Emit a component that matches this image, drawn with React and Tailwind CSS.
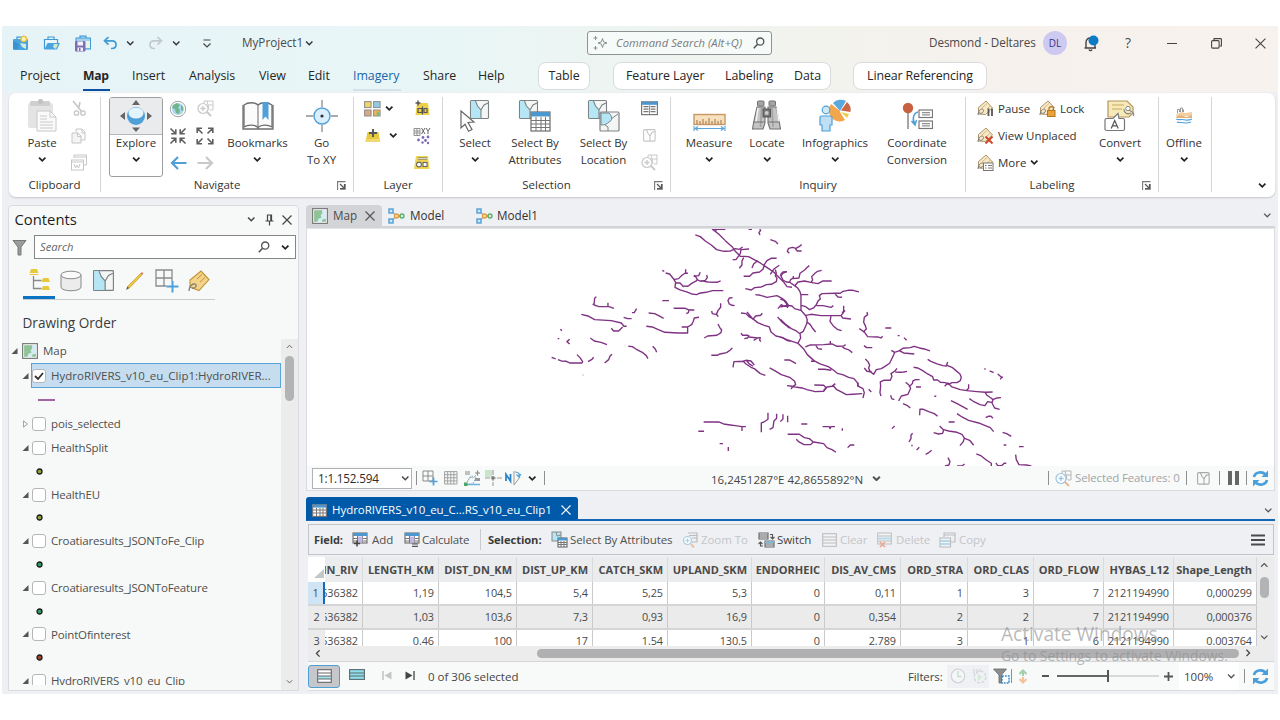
import React from "react";

const Svg = ({ w = 16, h = w, vb, className = "", children }) => (
  <svg width={w} height={h} viewBox={vb || `0 0 ${w} ${h}`} fill="none" className={"shrink-0 " + className}>
    {children}
  </svg>
);

const Chev = ({ c = "#222", s = 1.6, w = 8.5 }) => (
  <Svg w={w} h={w * 0.75} vb="0 0 8 6"><path d="M1 1.500L4 4.500L7 1.500" stroke={c} strokeWidth={s} /></Svg>
);
const Cross = ({ c = "#444", w = 10, s = 1.2 }) => (
  <Svg w={w} vb="0 0 10 10"><path d="M.5 .5L9.5 9.5M9.5 .5L.5 9.5" stroke={c} strokeWidth={s} /></Svg>
);
const Lens = ({ w = 12 }) => (
  <Svg w={w} vb="0 0 12 12"><circle cx="7.2" cy="4.6" r="3.6" stroke="#555" strokeWidth="1.3" /><path d="M4.6 7.3L.8 11.2" stroke="#555" strokeWidth="1.6" /></Svg>
);
const Cell = ({ className = "", children }) => (
  <div className={"flex shrink-0 items-center justify-center " + className}>{children}</div>
);

/* ---------- title bar icons ---------- */
const NewProject = () => (
  <Svg w={17} h={16}><path d="M5 4V2.200h5V4" stroke="#3f9ad6" strokeWidth="1.300" /><rect x="1" y="4" width="15" height="11" rx="1" fill="#4ba3dc" /><path d="M1 6l6 3-1 5H1z" fill="#3b93d2" /><path d="M8 8l6 1 0 5-4-2z" fill="#cfeadf" /><circle cx="11.800" cy="4" r="2.700" fill="#fff3a8" stroke="#e9c04c" strokeWidth="1.200" /><path d="M11.800 .2v1.200M8 4h1.200M14.600 4h1.200M9 1.200l.9.9M14.600 1.200l-.9.9" stroke="#e9c04c" strokeWidth=".8" /></Svg>
);
const OpenProject = () => (
  <Svg w={17} h={16}><path d="M5 4V2h6v2" stroke="#3f9ad6" strokeWidth="1.200" /><path d="M1.500 14V4.500h13V8" fill="#eaf6fb" stroke="#3f9ad6" strokeWidth="1.200" /><path d="M1.500 14.500L4.500 8H17l-3 6.500z" fill="#4ba3dc" /><path d="M11 9l4 0-2 5-3-2z" fill="#cfe8cc" /></Svg>
);
const SaveProject = () => (
  <Svg w={17} h={17}><path d="M6 3V1.200h6V3" stroke="#3f9ad6" strokeWidth="1.200" /><rect x="2" y="3" width="14.500" height="11" fill="#a6d2ef" stroke="#3f9ad6" /><path d="M11 6h5v7h-5z" fill="#e9f5e4" /><rect x="1" y="6" width="10.500" height="10.500" rx="1" fill="#7c6fb5" /><rect x="3.500" y="6.500" width="5.500" height="4" fill="#f3f1fb" /><rect x="3.500" y="12.500" width="5.500" height="3.500" fill="#f3f1fb" /><rect x="5" y="13" width="1.500" height="3" fill="#7c6fb5" /></Svg>
);
const Undo = ({ c, flip }) => (
  <Svg w={14} h={14} className={flip ? "-scale-x-100" : ""}><path d="M5.500 1L1.500 4.800L5.500 8.600M1.500 4.800H9c2.500 0 4 1.500 4 3.700S11.500 12.500 9 12.500H8" stroke={c} strokeWidth="1.700" /></Svg>
);

const TitleBar = () => (
  <div className="flex h-[34px] items-center text-[11.7px] text-[#4a4a4a]">
    <Cell className="ml-[2px] w-8"><NewProject /></Cell>
    <Cell className="w-[30px]"><OpenProject /></Cell>
    <Cell className="w-8"><SaveProject /></Cell>
    <Cell className="w-6"><Undo c="#3f9ad6" /></Cell>
    <Cell className="w-4"><Chev c="#333" s={1.3} /></Cell>
    <Cell className="ml-1 w-7"><Undo c="#c3c9cc" flip /></Cell>
    <Cell className="w-3"><Chev c="#333" s={1.3} /></Cell>
    <Cell className="w-12 pl-[2px]"><Svg w={10} h={9}><path d="M1.500 1h7M1.500 4.500L5 8L8.500 4.500" stroke="#444" strokeWidth="1.200" /></Svg></Cell>
    <span className="ml-3 w-[60px] shrink-0 whitespace-nowrap">MyProject1</span>
    <Cell className="w-[14px]"><Chev c="#333" s={1.3} /></Cell>
    <div className="ml-[271px] flex h-6 w-[185px] shrink-0 items-center rounded-[3px] border border-[#8d9394] bg-[#f6faf9] pl-[5px] text-[11.2px] tracking-[0.08px] italic text-[#7b7b7b]">
      <Svg w={15} h={14}><path d="M9.500 2.500l1.100 3.400 3.400 1.100-3.400 1.100-1.100 3.400-1.100-3.400L5 7l3.400-1.100z" stroke="#8b9092" strokeWidth="1" /><path d="M2.500 0v4M.5 2h4M2.500 10v4M.5 12h4" stroke="#8b9092" /></Svg>
      <span className="ml-2 w-[134px] whitespace-nowrap">Command Search (Alt+Q)</span>
      <span className="ml-[3px]"><Lens w={12} /></span>
    </div>
    <span className="ml-[157px] w-[107px] shrink-0 whitespace-nowrap tracking-[-0.08px]">Desmond - Deltares</span>
    <Cell className="ml-[7px] size-6 rounded-full bg-[#cdc9f1] text-[10px] font-medium text-[#3c3584]">DL</Cell>
    <Cell className="w-12"><Svg w={16} h={17}><path d="M1.500 13h11.500M3 13V7.500C3 4.500 5 3 7.500 3S12 5 12 8v5" stroke="#444" strokeWidth="1.400" /><path d="M6 14.500c.5 1.500 2.500 1.500 3 0" stroke="#444" strokeWidth="1.300" /><circle cx="10.500" cy="5.500" r="5" fill="#0b7bc6" /></Svg></Cell>
    <Cell className="w-[26px] text-[14px]">?</Cell>
    <Cell className="w-[62px]"><div className="h-px w-[10px] bg-[#444]" /></Cell>
    <Cell className="w-[26px]"><Svg w={11} h={11}><rect x=".6" y="2.600" width="7.500" height="7.500" rx="1" stroke="#444" strokeWidth="1.100" /><path d="M3 2.500V.6h6.500c.6 0 .9.4.9.9V8H8.500" stroke="#444" strokeWidth="1.100" /></Svg></Cell>
    <Cell className="ml-[13px] w-9"><Cross w={11} s={1} /></Cell>
  </div>
);

const RibbonTabs = () => (
  <div className="flex h-[32px] items-center whitespace-nowrap text-[12.4px] tracking-[-0.05px] text-[#262626]">
    <span className="ml-[18px] w-[63px]">Project</span>
    <span className="mr-[22px] mt-[5px] h-[25px] w-[27px] border-b-2 border-[#0b4fa0] pt-px text-[12.2px] font-bold leading-[18px] tracking-[-0.3px]">Map</span>
    <span className="w-[57px]">Insert</span>
    <span className="w-[70px]">Analysis</span>
    <span className="w-[49px]">View</span>
    <span className="w-[45px]">Edit</span>
    <span className="mr-[22px] mt-[5px] h-[25px] w-[48px] border-b-2 border-[#d6e0e8] pt-px leading-[18px] text-[#1a65ad]">Imagery</span>
    <span className="w-[55px]">Share</span>
    <span className="w-[60px]">Help</span>
    <Cell className="h-7 w-[52px] rounded-lg border border-[#d8dbde] bg-white">Table</Cell>
    <div className="ml-[23px] flex h-7 w-[218px] items-center rounded-lg border border-[#d8dbde] bg-white pl-[12px]">
      <span className="w-[99px]">Feature Layer</span><span className="w-[69px]">Labeling</span><span>Data</span>
    </div>
    <Cell className="ml-[22px] h-7 w-[134px] rounded-lg border border-[#d8dbde] bg-white tracking-[-0.12px]">Linear Referencing</Cell>
  </div>
);

/* ---------- ribbon icons ---------- */
const PasteIcon = () => (
  <Svg w={30} h={34}><rect x="1" y="4" width="25" height="25" rx="2" fill="#e4e4e4" /><rect x="3" y="2" width="20" height="5" rx="1" fill="#cfcfcf" /><rect x="11" y="0" width="5" height="5" rx="2" fill="#c2c2c2" /><path d="M10 12h13l6 6v14H10z" fill="#fafafa" stroke="#c8c8c8" /><path d="M23 12v6h6M13 17h7M13 20h7M13 23h13M13 26h13M13 29h13" stroke="#c8c8c8" /></Svg>
);
const CutIcon = () => (
  <Svg w={16} h={17}><path d="M2 1l9 11M9 2L8 7" stroke="#c6c6c6" strokeWidth="1.600" /><circle cx="5.500" cy="13" r="2.200" stroke="#c6c6c6" strokeWidth="1.300" /><circle cx="12" cy="13" r="2.200" stroke="#c6c6c6" strokeWidth="1.300" /></Svg>
);
const CopyIcon = ({ c = "#c6c6c6" }) => (
  <Svg w={16} h={16}><path d="M5 4V1h6l3 3v8h-4" fill="#fbfbfb" stroke={c} /><path d="M11 1v4h3" stroke={c} /><path d="M1 5h6l3 3v7H1z" fill="#f4f4f4" stroke={c} /><path d="M6.500 5v3.500h3.500" stroke={c} /></Svg>
);
const CopyPathIcon = () => (
  <Svg w={16} h={17}><path d="M3 4V1h12.500v10h-3" stroke="#c6c6c6" /><path d="M3 3h12" stroke="#c6c6c6" /><rect x=".5" y="6" width="12" height="10" stroke="#c6c6c6" /><path d="M.5 8h12M3 10l1.500 4 1.500-3 1.500 3L9 10" stroke="#c6c6c6" /></Svg>
);
const ExploreIcon = () => (
  <Svg w={32} h={32}><circle cx="16" cy="16" r="9" fill="#4f9fd8" /><ellipse cx="16" cy="13" rx="7.500" ry="5.500" fill="#e3f4fd" /><path d="M12 5h8l-4-5zM12 27.500h8l-4 4.500zM5 12v8l-5-4zM27 12v8l5-4z" fill="#666" /></Svg>
);
const GlobeIcon = () => (
  <Svg w={18} h={18}><circle cx="9" cy="9" r="7.700" fill="#fff" stroke="#999" strokeWidth=".9" /><circle cx="9" cy="9" r="6" fill="#aad6ec" /><path d="M4 5l4-2 3 2-2 3 2 2-1 4-3-1-1-4-3-1zM12 5l2 2v4l-2-1z" fill="#6fb68c" /></Svg>
);
const ZoomSel = ({ c = "#c9c9c9", l = "#c9c9c9", h = "#c9c9c9" }) => (
  <Svg w={17} h={17}><path d="M7 4V1h9v9h-3" stroke={c} /><path d="M10 1l1 4 5 0M11 5l1 5" stroke={c} /><circle cx="6" cy="8.500" r="5" fill="#fdfdfd" stroke={l} strokeWidth="1.200" /><path d="M3.500 8.500h5M6 6v5" stroke={l} strokeWidth="1.300" /><path d="M10 12l4 4" stroke={h} strokeWidth="2" /></Svg>
);
const ArrowsIn = () => (
  <Svg w={18} h={18}><g stroke="#5e5e5e" strokeWidth="1.600"><path d="M1.500 1.500L6 6M2.200 6.800H6.800V2.200M16.500 1.500L12 6M15.800 6.800H11.200V2.200M1.500 16.500L6 12M2.200 11.200H6.800V15.800M16.500 16.500L12 12M15.800 11.200H11.200V15.800" /></g></Svg>
);
const ArrowsOut = () => (
  <Svg w={18} h={18}><g stroke="#5e5e5e" strokeWidth="1.600"><path d="M2 2L6.500 6.500M1.200 6V1.200H6M16 2L11.500 6.500M12 1.200H16.800V6M2 16L6.500 11.500M1.200 12V16.800H6M16 16L11.500 11.500M12 16.800H16.800V12" /></g></Svg>
);
const ArrowBack = ({ c, flip }) => (
  <Svg w={17} h={14} className={flip ? "-scale-x-100" : ""}><path d="M8 1L2 7L8 13M2 7H16.500" stroke={c} strokeWidth="2.200" /></Svg>
);
const BookIcon = () => (
  <Svg w={32} h={30}><path d="M2 4C6 1 13 1 16 4C19 1 26 1 30 4V26C26 23.500 19 23.500 16 26.500C13 23.500 6 23.500 2 26z" fill="#fbfbfb" stroke="#6d6d6d" strokeWidth="1.300" /><path d="M1 4v24h14.500l.5-.8.5.8H31V4" stroke="#6d6d6d" strokeWidth="1.300" /><path d="M16 4v22" stroke="#8a8a8a" strokeWidth="1.300" /><path d="M20.500 1h6v18l-3-3.500-3 3.500z" fill="#4f9fd8" /></Svg>
);
const GoIcon = () => (
  <Svg w={32} h={32}><path d="M16 0v7M16 25v7M0 16h7M25 16h7" stroke="#8d8d8d" strokeWidth="1.300" /><circle cx="16" cy="16" r="8" fill="#d9effb" stroke="#4f9fd8" strokeWidth="1.400" /><circle cx="16" cy="16" r="1.600" fill="#333" /></Svg>
);
const BasemapIcon = () => (
  <Svg w={17} h={16}><rect x=".6" y=".6" width="6.500" height="6" fill="#eed469" stroke="#8d8d8d" /><rect x="9.600" y=".6" width="6.500" height="6" fill="#8fcbe2" stroke="#8d8d8d" /><rect x=".6" y="9" width="6.500" height="6" fill="#d9a987" stroke="#8d8d8d" /><rect x="9.600" y="9" width="6.500" height="6" fill="#f0b654" stroke="#8d8d8d" /><path d="M13 10l2.500 2v3h-3z" fill="#79b98b" /></Svg>
);
const AddLayer = () => (
  <Svg w={18} h={16}><path d="M3.500 4h11l1.500 10H1.500z" fill="#e8c93d" /><path d="M1.800 11.500l14-1 .4 3.500H1.500z" fill="#f0da70" /><path d="M9 1v8M5 5h8" stroke="#555" strokeWidth="1.900" /></Svg>
);
const QueryLayer = () => (
  <Svg w={18} h={17}><path d="M4 3h11l1.500 12H2.500z" fill="#ecd04a" /><path d="M5 .5v5M2.500 3h5" stroke="#555" strokeWidth="1.400" /><path d="M5 8.500h4v4H5zM9.500 6.500v8M11 8.500h3v4h-3z" stroke="#555" strokeWidth="1.200" /></Svg>
);
const XYLayer = () => (
  <Svg w={18} h={18}><path d="M1 1.500h6v7H1zM1 4h6M1 6h6M4 1.500v7" stroke="#888" strokeWidth=".9" /><path d="M8.500 1l3.500 6M12 1l-3.500 6M13 1l2 3 2-3M15 4v3" stroke="#666" strokeWidth="1" /><g fill="#7d68b5"><circle cx="10" cy="10.500" r="1.400" /><circle cx="15" cy="10" r="1.400" /><circle cx="5.500" cy="13" r="1.400" /><circle cx="12.500" cy="13.500" r="1.400" /><circle cx="9.500" cy="15.500" r="1.200" /><circle cx="15" cy="16" r="1.200" /></g></Svg>
);
const GraphicsLayer = () => (
  <Svg w={18} h={16}><path d="M3 1h12l1.500 13H1z" fill="#efd44f" /><path d="M5 3.500h9" stroke="#666" strokeWidth="2" /><path d="M5 3.500h9" stroke="#fff" strokeWidth=".7" /><circle cx="6" cy="9.500" r="2.400" fill="#fff" stroke="#666" strokeWidth="1.100" /><rect x="10" y="7.500" width="4" height="4" fill="#fff" stroke="#666" strokeWidth="1.100" /></Svg>
);
const MapTile = ({ x, y, s = 19, cyan }) => (
  <g transform={`translate(${x} ${y}) scale(${s / 19})`}>
    <rect x=".5" y=".5" width="18" height="18" rx="1" fill="#f4f5f5" stroke="#7d8385" strokeWidth="1.100" />
    {cyan && <path d="M1 1h4.500l2 5 3.500 4v8H1z" fill="#b5e6f5" />}
    <path d="M5.500 1l2 5 3.500 4v8.500M11 10l3-5 4-2" stroke="#7d8385" strokeWidth="1.100" />
  </g>
);
const SelectIcon = () => (
  <Svg w={32} h={34}><MapTile x={11} y={1} cyan /><path d="M2 12l13 11-6 .5 4 7-3.500 1.800-3.500-7L2 29z" fill="#fff" stroke="#666" strokeWidth="1.200" /></Svg>
);
const SelectAttr = () => (
  <Svg w={34} h={34}><MapTile x={1} y={1} cyan /><rect x="13" y="13" width="19" height="19" fill="#fff" stroke="#6d6d6d" strokeWidth="1.200" /><rect x="13" y="13" width="19" height="4.500" fill="#4d97cf" /><path d="M13 21.500h19M13 25h19M13 28.500h19M18 18v14M23 18v14M27.500 18v14" stroke="#777" /></Svg>
);
const SelectLoc = () => (
  <Svg w={34} h={34}><MapTile x={1} y={1} cyan /><rect x="13" y="13" width="19" height="19" rx="1" fill="#f4f5f5" stroke="#7d8385" strokeWidth="1.200" /><path d="M14 14h8c4 4 3 8 0 9-2 2-4 3-8 3z" fill="#b5e6f5" stroke="#7d8385" /><path d="M18 26l3 2v4M24 20l7-5" stroke="#7d8385" /></Svg>
);
const TableSm = ({ w = 17, c = "#777" }) => (
  <Svg w={w} h={w * 0.85} vb="0 0 17 14"><rect x=".6" y=".6" width="15.800" height="12.800" fill="#fff" stroke={c} strokeWidth="1.200" /><rect x=".6" y=".6" width="15.800" height="3" fill="#4d97cf" /><path d="M2.500 5.500h5M9.500 5.500h5M2.500 8h5M9.500 8h5M2.500 10.500h5M9.500 10.500h5" stroke={c} strokeWidth="1.200" /><path d="M8.500 4v9" stroke={c} strokeWidth=".8" /></Svg>
);
const ClearSel = ({ c = "#c6c6c6" }) => (
  <Svg w={13} h={13}><rect x=".6" y=".6" width="11.500" height="11.500" rx="1" stroke={c} strokeWidth="1.100" /><path d="M3.500 1l1.500 3.500L7 7v5M7 7l2-3.500L12 2.500" stroke={c} strokeWidth="1.100" /></Svg>
);
const MeasureIcon = () => (
  <Svg w={33} h={18}><rect x="1" y="1.500" width="31" height="10" fill="#f6e0bd" stroke="#c79763" strokeWidth="1.400" /><path d="M4 11V7M7 11V8M10 11V6M13 11V8M16 11V5M19 11V8M22 11V6M25 11V8M28 11V7" stroke="#a87b4a" strokeWidth="1.100" /><path d="M3 15.500h27M1 13v5M32 13v5M5 13.500l-3 2 3 2M28 13.500l3 2-3 2" stroke="#5aa5dc" strokeWidth="1.100" /></Svg>
);
const Binoc = () => (
  <Svg w={32} h={32}><rect x="6.500" y="1" width="6.500" height="5" rx="1" fill="#a5a5a5" stroke="#707070" /><rect x="18" y="1" width="6.500" height="5" rx="1" fill="#a5a5a5" stroke="#707070" /><path d="M6 7h8v16l-2 6H1.500L2.500 23zM25 7h-8v16l2 6h10.500L28.500 23z" fill="#c4c4c4" stroke="#707070" strokeWidth="1.100" /><path d="M7 8l-2 14M26 8l2 14" stroke="#f3f3f3" strokeWidth="1.600" /><path d="M10.500 8l-1 19M21 8l1 19" stroke="#a2a2a2" strokeWidth="1.600" /><rect x="12" y="9" width="7.500" height="8" fill="#777" stroke="#555" /><circle cx="15.700" cy="13" r="2" fill="#ccc" /><path d="M2.500 22h11M17.500 22h11" stroke="#707070" /></Svg>
);
const InfoIcon = () => (
  <Svg w={34} h={34}><path d="M22 12L15 4A11 11 0 0 1 28 2z" fill="#5ba8df" /><path d="M22 12L13 5a11 11 0 0 0 9 17.500z" fill="#f2a64e" /><path d="M23 11.500L29 3a11 11 0 0 1 3.500 10z" fill="#cb6744" /><path d="M23 13l8 2-2 4z" fill="#e9cd47" /><path d="M22 13l5 8a11 11 0 0 1-6 1.500z" fill="#f2a64e" /><circle cx="8" cy="11" r="3.800" fill="#cfe8f8" stroke="#4f9fd8" strokeWidth="1.200" /><path d="M3.500 17h9c1 0 1.500.5 1.500 1.500V26h-2v6H4v-6H2v-7.500c0-1 .5-1.500 1.500-1.500z" fill="#bfdff4" stroke="#4f9fd8" strokeWidth="1.200" /></Svg>
);
const CoordIcon = () => (
  <Svg w={32} h={30}><path d="M7 8v20" stroke="#888" strokeWidth="1.500" /><circle cx="7" cy="7" r="5.200" fill="#c8613f" /><rect x="18" y="9" width="13.500" height="7.500" fill="#fff" stroke="#777" strokeWidth="1.200" /><rect x="18" y="20" width="13.500" height="7.500" fill="#fff" stroke="#777" strokeWidth="1.200" /><path d="M21 11.700h8M21 13.900h8M21 22.700h8M21 24.900h8" stroke="#777" /><path d="M17 11c-5 1-6 8-3 12M10.500 20l3.500 4 1.500-5" stroke="#4f9fd8" strokeWidth="1.500" /></Svg>
);
const Tag = ({ kind }) => (
  <Svg w={17} h={17}><path d="M1.500 14V7.500L9 1l6.500 7-7 6.500z" fill="#f8e9c6" stroke="#b09468" strokeWidth="1" /><path d="M5 8l5-4.500M10 9l3.500-3" stroke="#cdb382" strokeWidth=".9" /><path d="M1 15c0-3 2-6 4-6s2 3 0 4-3 0-3-1" stroke="#7c7c7c" strokeWidth="1" />
    {kind === "pause" && <path d="M11.500 8.500v7.500M15 8.500v7.500" stroke="#555" strokeWidth="1.800" />}
    {kind === "lock" && <g><rect x="8.500" y="10.500" width="7.500" height="6" fill="#e9a33c" stroke="#b57519" /><path d="M10 10.500V8.500c0-2.500 4.500-2.500 4.500 0v2" stroke="#b57519" strokeWidth="1.200" /></g>}
    {kind === "x" && <path d="M8.500 9.500l7 7M15.500 9.500l-7 7" stroke="#d0482b" strokeWidth="2" />}
    {kind === "more" && <g><rect x="6.500" y="9" width="9.500" height="7.500" fill="#fff" stroke="#777" /><path d="M8 11.500h1.500M11 11.500h4M8 14h1.500M11 14h4" stroke="#777" /></g>}
  </Svg>
);
const ConvertIcon = () => (
  <Svg w={32} h={34}><path d="M4 2h19l6 6v6l-4 4H4z" fill="#f6eab8" stroke="#b7945a" strokeWidth="1.200" /><path d="M8 6h12M8 10h10" stroke="#c9a866" strokeWidth="1.200" /><circle cx="24" cy="9.500" r="2.200" fill="#fff" stroke="#888" /><path d="M25 11c4 2 6 4 4 6M20 10c0 4 3 6 7 4" stroke="#888" strokeWidth="1.200" /><path d="M2.500 19.500H9l5-5 1 5h4c1 0 1.500.5 1.500 1.500v9c0 1-.5 1.500-1.500 1.500H3c-1 0-2-.5-2-1.500v-9c0-1 .5-1.500 1.500-1.500z" fill="#fff" stroke="#777" strokeWidth="1.200" /><path d="M7.200 29.500l3.500-8 3.500 8M8.500 26.800h4.500" stroke="#555" strokeWidth="1.200" /></Svg>
);
const OfflineIcon = () => (
  <Svg w={17} h={17}><path d="M1.500 6V2.500h2V5M4.500 5V1h2v4M7.500 5V2.500" stroke="#999" /><path d="M.5 7l5-2 4 1 6.500-1v4H.5z" fill="#f0cfa3" /><path d="M.5 9l5-.5 5 1.500 5.500-2v3H.5z" fill="#e8b077" /><path d="M0 12c3 1.500 5 0 8 .8s6 0 8-.8M1 15c2 1.200 4 0 7 .8s5 0 7-.8" stroke="#4f9fd8" strokeWidth="1.100" /></Svg>
);
const Launcher = () => (
  <Svg w={9} h={9}><path d="M.6 9V.6H8.500" stroke="#777" strokeWidth="1.100" /><path d="M3 3l4 4M7.500 3v4.500H3" stroke="#555" strokeWidth="1.200" /><path d="M8.500 3V8.500H3" stroke="#777" strokeWidth=".8" /></Svg>
);

const Big = ({ className, icon, a, b, chev }) => (
  <div className={"flex shrink-0 flex-col items-center " + className}>
    <div className="flex h-[37px] items-center justify-center">{icon}</div>
    <div className="h-[17px] whitespace-nowrap leading-[18px]">{a}</div>
    <div className="flex h-[17px] items-center whitespace-nowrap leading-[17px]">{chev ? <Chev /> : b}</div>
  </div>
);
const Col = ({ className, children }) => (
  <div className={"-mt-[2px] flex shrink-0 flex-col items-center " + className}>
    {React.Children.map(children, (c) => <div className="flex h-[27px] items-center justify-center">{c}</div>)}
  </div>
);
const Group = ({ className, label, launch, children }) => (
  <div className={"my-[4px] flex h-[95px] shrink-0 flex-col border-r border-[#d5d6d8] " + className}>
    <div className="flex h-[82px]">{children}</div>
    <div className="flex h-[14px] items-center">
      <span className="flex-1 text-center leading-[14px]">{label}</span>
      {launch && <Cell className="w-5 pr-[3px]"><Launcher /></Cell>}
    </div>
  </div>
);

const Ribbon = () => (
  <div className="ml-[7px] mt-px flex h-[104px] w-[1266px] shrink-0 rounded-[7px] bg-white text-[11.5px] tracking-[-0.02px] text-[#333] shadow-[0_1px_2px_rgba(0,0,0,0.18)]">
    <Group className="w-[92px]" label="Clipboard">
      <Big className="ml-[15px] w-9" icon={<PasteIcon />} a="Paste" chev />
      <Col className="w-[38px]"><CutIcon /><CopyIcon /><CopyPathIcon /></Col>
    </Group>
    <Group className="w-[253px]" label="Navigate" launch>
      <div className="relative ml-[8px] h-[80px] w-[54px] shrink-0 overflow-hidden rounded-[3px] border border-[#9c9ea1]">
        <div className="h-[37px] border-b border-[#b5b7ba] bg-[#eaebed]" />
        <div className="absolute inset-0 -top-px"><Big className="w-[52px]" icon={<ExploreIcon />} a="Explore" chev /></div>
      </div>
      <Col className="w-[30px]"><GlobeIcon /><ArrowsIn /><ArrowBack c="#4f9fd8" /></Col>
      <Col className="w-6"><ZoomSel /><ArrowsOut /><ArrowBack c="#c9c9c9" flip /></Col>
      <Big className="w-[81px]" icon={<BookIcon />} a="Bookmarks" chev />
      <Big className="w-[47px]" icon={<GoIcon />} a="Go" b="To XY" />
    </Group>
    <Group className="w-[89px]" label="Layer">
      <Col className="ml-px w-12">
        <div className="flex items-center gap-1"><BasemapIcon /><Chev /></div>
        <div className="flex items-center gap-[7px] pl-1"><AddLayer /><Chev /></div>
      </Col>
      <Col className="ml-px w-9"><QueryLayer /><XYLayer /><GraphicsLayer /></Col>
    </Group>
    <Group className="w-[228px]" label="Selection" launch>
      <Big className="ml-[2px] w-[60px]" icon={<SelectIcon />} a="Select" chev />
      <Big className="w-[60px]" icon={<SelectAttr />} a="Select By" b="Attributes" />
      <Big className="w-[77px]" icon={<SelectLoc />} a="Select By" b="Location" />
      <Col className="-ml-px w-4"><TableSm /><ClearSel /><ZoomSel /></Col>
    </Group>
    <Group className="w-[295px]" label="Inquiry">
      <Big className="w-[76px]" icon={<div className="pt-3"><MeasureIcon /></div>} a="Measure" chev />
      <Big className="w-10" icon={<Binoc />} a="Locate" chev />
      <Big className="w-24" icon={<InfoIcon />} a="Infographics" chev />
      <Big className="w-[68px]" icon={<CoordIcon />} a="Coordinate" b="Conversion" />
    </Group>
    <Group className="w-[193px]" label="Labeling" launch>
      <div className="-mt-[2px] ml-[11px] w-[113px] shrink-0">
        <div className="flex h-[27px] items-center"><Tag kind="pause" /><span className="ml-[4px] w-[41px]">Pause</span><Tag kind="lock" /><span className="ml-[4px]">Lock</span></div>
        <div className="flex h-[27px] items-center"><Tag kind="x" /><span className="ml-[4px] whitespace-nowrap">View Unplaced</span></div>
        <div className="flex h-[27px] items-center"><Tag kind="more" /><span className="ml-[4px] mr-1">More</span><Chev /></div>
      </div>
      <Big className="w-[60px]" icon={<ConvertIcon />} a="Convert" chev />
    </Group>
    <Group className="w-[53px]" label="">
      <Big className="w-[50px]" icon={<OfflineIcon />} a="Offline" chev />
    </Group>
    <div className="flex flex-1 items-end justify-end pb-[9px] pr-[9px]"><Chev /></div>
  </div>
);

/* ---------- contents pane ---------- */
const MapThumb = ({ w = 15 }) => (
  <Svg w={w} vb="0 0 15 15"><rect x=".6" y=".6" width="13.800" height="13.800" fill="#fff" stroke="#777" strokeWidth="1.100" /><rect x="2" y="2" width="11" height="11" fill="#d3ebf5" /><path d="M2 2h7.500v3L8 7l1 2-3 1-1 3H2z" fill="#8fc295" /><path d="M9.500 11l3.500-1v3H9.500z" fill="#8fc295" /></Svg>
);
const Tri = ({ open }) => (
  <Svg w={7} h={8}>{open ? <path d="M6.500 1v6H.5z" fill="#555" /> : <path d="M1.500 .8v6.400L5.500 4z" stroke="#999" strokeWidth=".9" />}</Svg>
);
const Check = ({ on }) => (
  <div className="flex size-[14px] shrink-0 items-center justify-center rounded-[3px] border border-[#b4b6b9] bg-white">
    {on && <Svg w={10} h={8}><path d="M1 4l3 3 5-6" stroke="#333" strokeWidth="1.800" /></Svg>}
  </div>
);
const LayerRow = ({ name, open = true, dot }) => (
  <>
    <div className="flex h-[23.3px] shrink-0 items-center pl-[13px]">
      <Tri open={open} /><div className="ml-[3px]"><Check /></div><span className="ml-[5px] whitespace-nowrap tracking-[-0.16px]">{name}</span>
    </div>
    {dot && <div className="flex h-[23.3px] shrink-0 items-center pl-[27px]"><Svg w={7}><circle cx="3.500" cy="3.500" r="2.500" fill={dot} stroke="#1c1c1c" strokeWidth="1.300" /></Svg></div>}
  </>
);

const ContentsPane = () => (
  <div className="flex h-[486px] w-[291px] shrink-0 flex-col rounded-t-[4px] border border-[#dadbde] bg-[#f7f9f8] text-[11.5px] text-[#4f4f4f]">
    <div className="flex h-[27px] shrink-0 items-center pl-[5.500px] text-[14.800px] text-[#1d1d1d]">
      <span className="w-[232px] whitespace-nowrap">Contents</span>
      <Chev c="#444" s={1.4} />
      <span className="ml-[10px]"><Svg w={9} h={12}><path d="M2.500 1h4v6h-4zM.5 7h8M4.500 7v4.500M5.800 1v6" stroke="#444" strokeWidth="1.200" /></Svg></span>
      <span className="ml-[8px]"><Cross w={10} /></span>
    </div>
    <div className="flex h-7 shrink-0 items-center pl-[3px]">
      <Svg w={15} h={17}><path d="M1 1.500h13L9 8v8H6V8z" fill="#9b9b9b" stroke="#777" /></Svg>
      <div className="ml-[7px] flex h-[24px] w-[262px] items-center border border-[#858585] bg-white pl-[5px] text-[11.200px] italic text-[#666]">
        <span className="w-[218px]">Search</span><Lens w={12} /><span className="ml-[11px]"><Chev /></span>
      </div>
    </div>
    <div className="ml-[14px] mt-[3px] flex h-[36px] w-[192px] shrink-0 border-b border-[#c9cbcd]">
      <Cell className="w-8 border-b-[3px] border-[#0a74c4]"><Svg w={23} h={24}><path d="M1.500 5L3 1h6l1.500 4zM1.500 6h9v1h-9zM13.500 14l1.500-4h5.500l1.500 4zM13.500 22l1.500-4h5.500l1.500 4z" fill="#e8c93d" /><path d="M5.500 8v12.500h8M5.500 12.500h8" stroke="#888" strokeWidth="1.300" /></Svg></Cell>
      <Cell className="w-8 pb-[2px]"><Svg w={22} h={22}><path d="M1 5v12c0 5 20 5 20 0V5" fill="#ececec" stroke="#888" /><ellipse cx="11" cy="5" rx="10" ry="3.800" fill="#fafafa" stroke="#888" /></Svg></Cell>
      <Cell className="w-8 pb-[2px]"><Svg w={21} h={21}><MapTile x={0} y={0} s={21} cyan /></Svg></Cell>
      <Cell className="w-8 pb-[2px]"><Svg w={20} h={20}><path d="M2.500 15.500L15.500 2.500l1.500 1.500L4.500 17l-2.500 1z" fill="#ecc63c" stroke="#b89328" strokeWidth=".6" /><path d="M15.500 2.500L17 1l1.500 1.500L17 4z" fill="#e07d6b" /><path d="M2.500 15.500l1.500 1.500-3 2z" fill="#555" /></Svg></Cell>
      <Cell className="w-8 pb-[2px]"><Svg w={24} h={24}><path d="M1 1h16v16H1zM9 1v16M1 9h16" stroke="#8a8a8a" strokeWidth="1.300" /><path d="M17.500 12v11.500M11.500 17.500H23.500" stroke="#f7f9f8" strokeWidth="4" /><path d="M17.500 12v11.500M11.500 17.500H23.500" stroke="#4f9fd8" strokeWidth="2" /></Svg></Cell>
      <Cell className="w-8 pb-[2px]"><Svg w={22} h={22}><path d="M2 17V10L13 1l8 8.500-10 11z" fill="#f3d489" stroke="#c19136" strokeWidth="1.100" /><path d="M9 9l5-4.500M12 12l5-4.500" stroke="#c19136" /><path d="M1 21c0-4 3-8 6-7s0 5-3 4" stroke="#777" strokeWidth="1.200" /></Svg></Cell>
    </div>
    <div className="mt-[11px] h-[28px] shrink-0 pl-[13.500px] pt-[2px] text-[13.600px] leading-[20px] text-[#3c3c3c]">Drawing Order</div>
    <div className="flex min-h-0 flex-1">
      <div className="flex h-[346px] w-[272px] shrink-0 flex-col overflow-hidden">
        <div className="flex h-[24px] shrink-0 items-center pl-[2px]"><Tri open /><div className="ml-[4px]"><MapThumb w={16} /></div><span className="ml-[5px]">Map</span></div>
        <div className="flex h-[25px] shrink-0 items-center pl-[13px]"><Tri open />
          <div className="ml-[2px] flex h-[25px] w-[250px] items-center border border-[#57a5d8] bg-[#c5ddef]"><Check on /><span className="ml-[5px] whitespace-nowrap">HydroRIVERS_v10_eu_Clip1:HydroRIVER...</span></div>
        </div>
        <div className="flex h-[23px] shrink-0 items-center pl-[29px]"><div className="h-[2px] w-[17px] bg-[#a163a4]" /></div>
        <div className="h-px shrink-0" />
        <LayerRow name="pois_selected" open={false} />
        <div className="h-px shrink-0" />
        <LayerRow name="HealthSplit" dot="#8fa63d" />
        <LayerRow name="HealthEU" dot="#8fa63d" />
        <LayerRow name="Croatiaresults_JSONToFe_Clip" dot="#2f9e63" />
        <LayerRow name="Croatiaresults_JSONToFeature" dot="#2f9e63" />
        <LayerRow name="PointOfinterest" dot="#a5472f" />
        <LayerRow name="HydroRIVERS_v10_eu_Clip" />
      </div>
      <div className="flex flex-1 flex-col items-center justify-between bg-[#ececed] pb-[6px] pt-[5px]">
        <div className="flex flex-col items-center gap-[7px]"><div className="rotate-180"><Chev c="#555" s={1} w={7} /></div><div className="h-[45px] w-[9px] rounded-full bg-[#b2b3b5]" /></div>
        <Chev c="#555" s={1} w={7} />
      </div>
    </div>
  </div>
);

/* ---------- map view ---------- */
const riversWest = "M465 29l15 5 15 13 18 12 16 14 22 5 20-1 14-7 12 2 10-7M515 11l20 15 20 20 22 20 8 12 15 15 25 1 15 8 20 11 25 17 15 10 15 15 15 15 10 14 15 2M515 12h40M527 12v8M577 103h10l13-18 2-12 24-2M610 97l-5 10v12l-8 10M635 128l5-12 12-10M672 118l8-12 12-7h17M610 153h18l10-10 20-3 10-8 5-15M690 147l10-15 17-12M615 190l18 4 10-7 20-2 15-7 15-1 15-8 2-10-5-8 3-8-3-10M722 152l5-8 12-5M645 208l15 2 20 6 30-5 15 8 12 10 8 12-5 7M742 243h-12l-7-5-10 12M625 12h10M658 12l3 3-5 7 3 7M690 43l15 5 8 8M366 135l6 3M376 143l12 3 12 15 6 10-2 15 15 8 20 6 15 6 15 2 8-4 20-3 20-5h32M400 163l15-3 10-10 10-7 8 1M436 132v10M407 173h12l12 12M425 182l18 1 10-8 15-8 3-5-5-8-5-4M460 153l15-2 5-10M470 163l12 5 13-3 6-8-2-8M482 166l20 4 28 1 11-4M366 226h20M400 249h35l10 5h17M446 254l-2 8-6 3M325 263l18 2 12 6 15 8M318 303l18 2 18 8 20 8 40 2h28v-18h-18M442 305l12-7 5-10 3-10 14-2M168 214l-5 5-2 20 15 5h30l15 5M203 232v10M157 236l10 6M123 267l20 5 20 11 50 3 30 7 8 10h8M247 305l-12 12h-15l-7-8M289 250l-5 8-2 4h-7M250 276l12 4h12M60 312l5 4M52 340h5M88 342l-8 7 8 7M150 338l12 9 20 4 18 7M34 396l12 5M53 403l10 4 15 1 10 5h37l2-4-8-12-9-9M143 409l12-7 5-6M193 413l12-10 4-10 6-6M264 363l12 1 12 8 18 9 12 10 5 9M337 363l8 8 4 10M541 234v12l-8 10-5 12-12-3-2-8M528 266l6 8M577 217l-10 1-4 8 4 10 8 4 8 1M533 296l5 10 6 8-2 8-12 8-28 2-10 6M513 390h18l8-4 20-4 10-7 7-7M602 263l15 2 10 10 10 5 15 12 20 8 15 5 5 15 15 12 20 5 12 8 12 3M620 260l8 10 10 12 8-10 15-2 5-6M602 324l5 6h15l5 5 25 3 8-1-2 8 4 4M612 340l10-2 5-8M640 345l12-7M578 426l3-17 28-1 8 8 15 10 10 4 18 15 15 5M605 408l12-3 15 2 10 12M618 405l8 10 12 8M712 275l12 14 12 10 12 10";
const riversCentral = "M27 84l-6-6 4-9 12-3 10 3 8-4 9-7M45 70l6 7h13M0 148l8 16 10 6 10 1 15 10 10 8 6 10 3 10v46l15 17 4 12-2 12-10 22-10 6 2 14-8 16 18 18 10 16 20 18 18 10 25 8 15 10 12 10 16 4 18 8 16 4 10 12 3 12M62 208h22M0 148l8-8 12-1M28 171l3-8 8-5v-6M36 160l20-2 3-14 14-10 8-8 6-5M45 180l8-10 20-3 18 4 22 4 15-8h26M92 172l5-8-3-10 10-10 8-6 12-3M62 240l12 3 14 10 12-5 8-10 6-12 6-5-3-10 8-6 40-1h15l8-6 15-3h15l18 5M165 207l8 8 12 1M108 241h20l25 5 6-5M77 270l15-3 30 4h60l8-10v-20M185 262l10-6M182 270l5 8 25 3M152 273l-3 15 10 14 12 10 13 4M80 290l10 8 6 10 10 12M0 222l10 2 8 10 2 6M0 245l20-5 15 2 8 8 18 5M0 282l15 14 18 14 15 7 12 9M0 335l20 8 18 6 15 5M75 365l15-6 40-1 25-2 15 7 20-1 6-4M150 347v10M105 358l8 12 12 2M182 362l12 8 12 4 10 8M12 404h15l10 5 10 6M92 408h12M113 432h20l20 3M260 260l2 8-10 8-2 15 5 10 3 10-10 10M237 310l15 10 10 14 30 1 10 3 5-5M315 308h18M352 331h6M371 337l8 8M251 361l8 6h17M333 375l10 6-3 8-12 25-15 10-10 6-15 3-8 14-10-8-5-10 3-10-5-10-8-8M252 428l8 10 15 2M343 381l15-5 10-7 22-2 12-4 15 5 15 3 17 6M355 375l15 8 32 3M442 402l10 6 18 8 18 5 10 1 4-12M500 420l15 6 12 10 12 10 4 10-3 10-10 6h-15l-10 5-10-5-15-1-8-7h-12l-3-10-15-8-15-10-15-8-12-2M612 431h4M628 437l12 5M652 446l12 10-4 6M664 456h4";
const riversSouth = "M268 23l15 8 20 12 25 8 15 12 3 10-8 5-6 8M320 76l15 2 15 3 15 2 15 5 25 6 25-1 8-10-8-8-28-1M430 90l10-10 20-3 8 10 15 8 15 8 20-1 28-2M534 67l-2 10 16 8 4 12-4 16M455 78l10-8M565 87l8 8M602 107l-3-10 2-20-1-12 10-5h20l5-12-3-8 12-8 6-8M645 35l15 1 10-1 10-2M631 105l3 10 8 3M655 122l8-15 20-5 8-18-5-10-10-8M686 80l10-10 2-8 8-4h12M707 80h15M762 108h6M668 130l12 5 10 8M718 165l1-18h10l18 8 15 5 10 8M812 121l20 10 15 8 15 8M793 78l10-10 12 12 25 8 20 3 30 3 25 2 22-1M865 72v12l-6 6M915 97l5 8 12 8 6 5-3 10 8 15 15 4M938 118l12-5 12-1M867 115l12 8 20 10 15 3 8-12 15 3M830 160l15 10 20 10 30 8 20 8 15 6 10 12M916 172l8-4h8l6 6M805 185h18M967 216l12 4 14 8M970 254h8M1016 259h14M760 217l15 4 12-2 3-10-12-12M790 208l15 4 25 4 15 6 8 12 15 6 12 15M852 234l-3 10-10 12M888 281l15 6 15 12 15 10v10M947 308l5 8h12l8-7h6M1006 283l2 15 8 15 22 1 15 3M803 292l6 12-3 10-12 3M830 317h15l8-6M643 197l-8 8M697 219l-5 6v10l-6 10M695 253v5M717 261l-8 8M754 270l-10 8-8 4M70 185h45l15 6 20 3 15 2 20 3h12M185 198v14M54 213h17M118 250h10M144 260v12M243 216v-28l8-3 12-8v-20M268 207l10-5 3-20 8-8v-14M308 162v14l-8 8M322 166v20M363 191h18M427 199h20l2 6 3-6h12M486 204v7M322 222h35l15 10 15 3 12 10-8 8h-20l-15-8-8-8M400 245l30 5 10 12 15 6 12 8M502 262l8-8h12";

const RiverMap = () => (
  <svg width="968" height="237" viewBox="307 229 968 237" fill="none" className="block bg-white">
    <g stroke="#7f3283" strokeWidth="4.100" strokeLinejoin="round">
      <path d={riversWest} transform="translate(540.300 225.300) scale(.33333)" />
      <path d={riversCentral} transform="translate(780.300 225.300) scale(.33333)" />
      <path d={riversSouth} transform="translate(680.300 360.300) scale(.33333)" />
    </g>
    <circle cx="583" cy="375" r=".7" fill="#c79fca" />
  </svg>
);
const ModelIcon = () => (
  <Svg w={17} h={16}><path d="M4 3l4 5h5M4 13l4-5" stroke="#888" /><g strokeWidth="1.400"><rect x="1" y="1" width="4" height="4" fill="#cfe7f7" stroke="#4f9fd8" /><rect x="1" y="11" width="4" height="4" fill="#cfe7f7" stroke="#4f9fd8" /><circle cx="8.500" cy="8" r="2" fill="#fbe0b2" stroke="#e09a3b" /><circle cx="14" cy="8" r="2" fill="#dff2df" stroke="#58b06a" /></g></Svg>
);
const Refresh = () => (
  <Svg w={17} h={17}><path d="M2 7C3 2 10 1 13.500 4.500M15 10c-1 5-8 6-11.500 2.500" stroke="#4a9edb" strokeWidth="2.600" /><path d="M16 .5V7H9.500zM1 16.500V10h6.500z" fill="#4a9edb" /></Svg>
);
const Bar = ({ className = "" }) => <div className={"h-[14px] w-px shrink-0 bg-[#8f8f8f] " + className} />;

const MapView = () => (
  <div className="flex h-[286px] w-[969px] shrink-0 flex-col">
    <div className="flex h-[21px] shrink-0 items-center text-[11.7px] text-[#333]">
      <div className="flex h-[22px] w-[76px] items-center rounded-t-[4px] bg-[#d3d4d7] pl-[6px] text-[#4c4c4c]"><MapThumb w={16} /><span className="ml-[5px] w-[32px]">Map</span><Cross w={10} c="#555" /></div>
      <div className="ml-[6px] flex w-[88px] items-center"><ModelIcon /><span className="ml-[5px]">Model</span></div>
      <div className="flex w-[787px] items-center"><ModelIcon /><span className="ml-[4px]">Model1</span></div>
      <Chev c="#555" s={1.2} />
    </div>
    <div className="h-[3px] shrink-0 border-b border-[#e3e4e6] bg-[#d3d4d7]" />
    <div className="flex h-[262px] shrink-0 flex-col border border-t-0 border-[#dadbde] bg-[#f8faf9]">
      <div className="h-[237px] overflow-hidden"><RiverMap /></div>
      <div className="flex h-[24px] items-center text-[11.5px] text-[#444]">
        <div className="ml-[5px] flex h-[21px] w-[100px] items-center border border-[#b1b2b5] bg-white pl-[5px] pt-px text-[11.7px] text-[#2b2b2b]"><span className="w-[83px] tracking-[-0.18px]">1:1.152.594</span><Chev c="#444" s={1.3} /></div>
        <Bar className="ml-[4px]" />
        <Cell className="ml-[3px] w-5"><Svg w={16} h={16}><path d="M1 1h10v10H1zM6 1v10M1 6h10" stroke="#8a8a8a" /><path d="M11.500 7.500v8M7.500 11.500h8" stroke="#4f9fd8" strokeWidth="1.700" /></Svg></Cell>
        <Cell className="w-[22px]"><Svg w={14} h={14}><path d="M.6 .6h12.400v12.400H.6zM.6 3.700h12.400M.6 6.800h12.400M.6 9.900h12.400M3.700 .6v12.400M6.800 .6v12.400M9.900 .6v12.400" stroke="#999" strokeWidth=".9" /></Svg></Cell>
        <Cell className="w-[21px]"><Svg w={17} h={16}><path d="M1 2h5M1 4h5M11 3h5M13.500 .5v5" stroke="#888" strokeWidth="1.200" /><path d="M2 14L7 6l5 1-3 7z" stroke="#6bb2dd" strokeDasharray="1.500 1" /><path d="M3 12l3-5 3 1 3-3" stroke="#aaa" strokeWidth=".8" /><rect x="11" y="8" width="5" height="3" fill="#999" /><path d="M3 14.500h13" stroke="#6bb2dd" strokeWidth="1.500" /><rect x="0" y="12.500" width="3.500" height="3.500" fill="#4ba465" /></Svg></Cell>
        <Cell className="w-[20px]"><Svg w={17} h={16}><rect x="0" y="0" width="7" height="7" fill="#c9e6cb" /><path d="M8 0v16M0 8h17" stroke="#999" strokeWidth="1.100" strokeDasharray="5 1" /><rect x="6.500" y="6.500" width="3" height="3" fill="#777" /></Svg></Cell>
        <Cell className="w-[20px]"><Svg w={17} h={16}><path d="M1 11V4.500l4.500 6.500V4" stroke="#2f86c8" strokeWidth="1.800" /><path d="M9 1v14" stroke="#999" /><path d="M9 15L15 7" stroke="#999" /><path d="M10 2c4 0 5 2 4 5M11.500 4.500L14 7l2-3" stroke="#4f9fd8" strokeWidth="1.200" /></Svg></Cell>
        <Cell className="w-[19px] pt-px"><Chev /></Cell>
        <Bar className="ml-[2px]" />
        <span className="ml-[166px] mt-[3px] w-[154px] whitespace-nowrap">16,2451287°E 42,8655892°N</span>
        <span className="ml-[7px]"><Chev c="#555" s={1.800} w={9} /></span>
        <Bar className="ml-[167px]" />
        <div className="ml-[6px] flex w-[131px] items-center text-[#a3a4a5]"><ZoomSel c="#b5b5b5" l="#9cc7e3" h="#e5b891" /><span className="ml-[3px] whitespace-nowrap tracking-[-0.14px]">Selected Features: 0</span></div>
        <Bar /><Cell className="w-[32px]"><ClearSel c="#a9a9a9" /></Cell><Bar />
        <Cell className="w-[26px] gap-[3px]"><div className="h-[14px] w-[4px] bg-[#666]" /><div className="h-[14px] w-[4px] bg-[#666]" /></Cell>
        <Bar /><Cell className="ml-[3px] w-5"><Refresh /></Cell>
      </div>
    </div>
  </div>
);

/* ---------- attribute table ---------- */
const rows = [
  ["1", "536382", "1,19", "104,5", "5,4", "5,25", "5,3", "0", "0,11", "1", "3", "7", "2121194990", "0,000299"],
  ["2", "536382", "1,03", "103,6", "7,3", "0,93", "16,9", "0", "0,354", "2", "2", "7", "2121194990", "0,000376"],
  ["3", "536382", "0.46", "100", "17", "1.54", "130.5", "0", "2.789", "3", "1", "6", "2121194990", "0.003764"],
];
const heads = ["MAIN_RIV", "LENGTH_KM", "DIST_DN_KM", "DIST_UP_KM", "CATCH_SKM", "UPLAND_SKM", "ENDORHEIC", "DIS_AV_CMS", "ORD_STRA", "ORD_CLAS", "ORD_FLOW", "HYBAS_L12", "Shape_Length"];
const gridCols = "grid grid-cols-[17px_38px_76px_78px_76px_75px_84px_73px_76px_67px_66px_70px_70px_83px]";

const SmallTable = ({ c = "#777", f = "#4d97cf", children }) => (
  <Svg w={16} h={15}><rect x="1" y="1" width="14" height="10" fill="#fff" stroke={c} strokeWidth="1.200" /><rect x="1" y="1" width="14" height="3" fill={f} /><path d="M1 6.500h14M1 9h14M5.500 4v7M10.500 4v7" stroke={c} /><rect x="6" y="4.500" width="4.500" height="6" fill="#c3b8e3" />{children}</Svg>
);
const Stripes = ({ c, f = "#fff", w = 15, h = 14, mid }) => (
  <Svg w={w} h={h} vb="0 0 15 14"><rect x=".7" y=".7" width="13.600" height="12.600" fill={f} stroke={c} strokeWidth="1.100" />{mid && <rect x="1.200" y="7" width="12.600" height="3" fill={mid} />}<path d="M1 4h13M1 7h13M1 10h13" stroke={c} strokeWidth="1.100" /></Svg>
);
const ToolBtn = ({ className, icon, children }) => (
  <div className={"flex shrink-0 items-center whitespace-nowrap " + className}>{icon}<span className="ml-[4px]">{children}</span></div>
);

const TablePane = () => (
  <div className="mt-[7px] flex h-[193px] w-[969px] shrink-0 flex-col">
    <div className="flex h-[23px] shrink-0 items-center justify-between border-b-2 border-[#1467b3] pr-[3px]">
      <div className="flex h-[23px] w-[272px] items-center rounded-t-[3px] bg-[#015aa9] pl-[6px] pt-[3px] text-[11.5px] text-white">
        <Svg w={15} h={13}><rect x=".6" y=".6" width="13.800" height="11.800" fill="#fff" stroke="#777" strokeWidth="1.200" /><rect x=".6" y=".6" width="13.800" height="3" fill="#4d97cf" /><path d="M1 6h13M1 9h13M4.500 4v8M8 4v8M11 4v8" stroke="#777" /></Svg>
        <span className="ml-[5px] w-[229px] whitespace-nowrap tracking-[-0.04px]">HydroRIVERS_v10_eu_C...RS_v10_eu_Clip1</span>
        <Cross c="#fff" w={10} s={1.1} />
      </div>
      <div className="pt-1"><Chev c="#555" s={1.200} /></div>
    </div>
    <div className="ml-[2px] mt-[3px] flex h-[31px] w-[966px] shrink-0 items-center border border-[#c3c4c8] bg-[#eff0f3] text-[11.5px] tracking-[-0.08px] text-[#505050]">
      <span className="ml-[5px] w-[38px] text-[11px] font-bold text-[#3c3c3c]">Field:</span>
      <ToolBtn className="w-[52px]" icon={<SmallTable><path d="M5 8.500v6M2 11.500h6" stroke="#444" strokeWidth="1.500" /></SmallTable>}>Add</ToolBtn>
      <ToolBtn className="w-[76px]" icon={<SmallTable><path d="M8 12h6M8 14.300h6" stroke="#555" strokeWidth="1.200" /></SmallTable>}><span className="-ml-[2px] tracking-[-0.2px]">Calculate</span></ToolBtn>
      <div className="h-[21px] w-px shrink-0 bg-[#c9cacd]" />
      <span className="ml-[7px] w-[63px] shrink-0 text-[11.200px] font-bold text-[#3c3c3c]">Selection:</span>
      <div className="flex w-[131px] shrink-0 items-center whitespace-nowrap"><Svg w={17} h={17}><rect x="1" y="1" width="9" height="9" fill="#b5e6f5" stroke="#888" /><path d="M5 1l1 4 4-1" stroke="#888" /><rect x="7" y="7" width="9" height="9" fill="#fff" stroke="#666" strokeWidth="1.100" /><rect x="7" y="7" width="9" height="2.500" fill="#4d97cf" /><path d="M7 11.500h9M7 13.500h9M10 10v6M13 10v6" stroke="#777" /></Svg><span className="ml-[2px]">Select By Attributes</span></div>
      <ToolBtn className="w-[76px] text-[#c3c5c8]" icon={<Svg w={16} h={16}><path d="M6 1h9v9H9M7 3.500h8M10 6h5" stroke="#bbb" strokeWidth="1.200" /><circle cx="5.500" cy="8.500" r="4" fill="#f5f9fc" stroke="#a9cfe6" strokeWidth="1.200" /><path d="M3.500 8.500h4M5.500 6.500v4" stroke="#a9cfe6" /><path d="M9 12l3 3.500" stroke="#ecc3a1" strokeWidth="2" /></Svg>}><span className="-ml-px">Zoom To</span></ToolBtn>
      <div className="flex w-[64px] shrink-0 items-center whitespace-nowrap text-[#3f3f3f]"><Svg w={17} h={16}><path d="M1 1h9v6H1zM1 3h9M1 5h9M7 9h9v6H7zM7 11h9M7 13h9" stroke="#666" strokeWidth="1.100" /><rect x="7" y="9.500" width="9" height="1.500" fill="#6cc0e0" /><path d="M12 2.500h2.500v4M12.500 5l2 2 2-2M5 14H2.500v-4M.5 12l2-2 2 2" stroke="#555" strokeWidth="1.100" /></Svg><span className="ml-[2px]">Switch</span></div>
      <ToolBtn className="w-[55px] text-[#c3c5c8]" icon={<Stripes c="#bcbdbf" f="#f3f3f4" />}><span className="-ml-px">Clear</span></ToolBtn>
      <ToolBtn className="w-[62px] text-[#c3c5c8]" icon={<Svg w={15} h={16}><rect x=".7" y="1" width="13.600" height="11" fill="#f3f3f4" stroke="#bcbdbf" /><path d="M1 4h13M1 9h13" stroke="#bcbdbf" /><path d="M1 6.500h13" stroke="#b8dcea" strokeWidth="2" /><path d="M3 10l5 5M8 10l-5 5" stroke="#eda58e" strokeWidth="1.700" /></Svg>}>Delete</ToolBtn>
      <ToolBtn className="w-[312px] text-[#c3c5c8]" icon={<Svg w={17} h={16}><path d="M5 5V1h11v9h-4M5 3h11" stroke="#bcbdbf" strokeWidth="1.100" /><rect x="1" y="6" width="10.500" height="9" fill="#eef5f8" stroke="#bcbdbf" strokeWidth="1.100" /><path d="M1 9h10M1 12h10" stroke="#a9cfe0" strokeWidth="1.300" /></Svg>}><span className="-ml-px">Copy</span></ToolBtn>
      <Svg w={14} h={12}><path d="M0 1.500h14M0 6h14M0 10.500h14" stroke="#4a4a4a" strokeWidth="2.200" /></Svg>
    </div>
    <div className="ml-[2px] mt-[2px] flex h-[89px] w-[966px] shrink-0">
      <div className="h-[89px] w-[949px] overflow-hidden">
        <div className={gridCols + " h-[25px] bg-[#ebeced] text-[11px] font-bold tracking-[-0.02px] text-[#4a4a4a]"}>
          <div className="flex items-end justify-end bg-white pb-[4px] pr-[1px]"><Svg w={10} h={9}><path d="M10 0v9H0z" fill="#c5c6c8" /></Svg></div>
          {heads.map((h) => <div key={h} className="flex items-center justify-end overflow-hidden whitespace-nowrap border-r border-[#dadbdc] pr-[4px]">{h}</div>)}
        </div>
        {rows.map((r, i) => (
          <div key={i} className={gridCols + " h-[24px] border-b-2 border-[#d4d5d7] text-[10.9px] tracking-[-0.1px] text-[#4a4a4a] " + (i % 2 ? "bg-[#ebebec]" : "bg-white")}>
            {r.map((v, j) => j === 0
              ? <div key={j} className={"flex items-center justify-center " + (i ? "bg-[#ebebec]" : "border-r-2 border-[#1569b5] bg-[#cfe4f5]")}>{v}</div>
              : <div key={j} className="flex items-center justify-end overflow-hidden whitespace-nowrap border-r border-[#c9cacc] pr-[4px]">{v}</div>)}
          </div>
        ))}
      </div>
      <div className="flex flex-1 flex-col items-center bg-[#ececed] pr-[3px] pt-[5px]">
        <div className="rotate-180"><Chev c="#555" s={1.100} /></div>
        <div className="mt-[9px] h-[21px] w-[9px] rounded-full bg-[#b2b3b5]" />
        <div className="mt-[36px]"><Chev c="#555" s={1.100} /></div>
      </div>
    </div>
    <div className="ml-[2px] flex h-[16px] w-[966px] shrink-0 items-center border-b border-[#d5d6d8] bg-[#ececed]">
      <div className="ml-[6px] w-[223px]"><div className="w-2 rotate-90"><Chev c="#444" s={1.200} /></div></div>
      <div className="h-[9px] w-[702px] rounded-full bg-[#b0b0b2]" />
      <div className="ml-[5px] w-2 -rotate-90"><Chev c="#444" s={1.200} /></div>
    </div>
    <div className="ml-[2px] flex h-[29px] w-[966px] shrink-0 items-center border-b border-[#dadbde] bg-[#f8faf9] text-[11.5px] text-[#444]">
      <Cell className="h-[23px] w-[32px] rounded-[3px] border-[1.500px] border-[#4f9fd3] bg-[#c6c7cb]"><Stripes c="#666" f="#fff" mid="#9fe2ee" /></Cell>
      <Cell className="w-[33px] pb-[3px]"><Svg w={16} h={11}><rect x=".6" y=".6" width="14.800" height="9.800" fill="#8fdfec" stroke="#5d6a6d" strokeWidth="1.100" /><path d="M1 4h14M1 7h14" stroke="#5d6a6d" strokeWidth="1.100" /></Svg></Cell>
      <Cell className="ml-1 w-[20px] pb-px"><Svg w={10} h={9}><path d="M1 0v9" stroke="#b9b9b9" strokeWidth="1.300" /><path d="M9.500 .5v8L2.500 4.500z" fill="#c5c5c5" /></Svg></Cell>
      <Cell className="w-[26px] pb-px"><Svg w={10} h={9}><path d="M9 0v9" stroke="#444" strokeWidth="1.300" /><path d="M.5 .5v8L7.500 4.500z" fill="#444" /></Svg></Cell>
      <span className="ml-[5px] w-[480px] whitespace-nowrap pt-[2px]">0 of 306 selected</span>
      <span className="w-[39px] pt-[2px] tracking-[-0.12px]">Filters:</span>
      <Cell className="h-[23px] w-[21px] bg-[#eff1f4]"><Svg w={16}><circle cx="8" cy="8" r="6.800" stroke="#d2d6da" strokeWidth="1.300" fill="#f5f6f8" /><path d="M8 3v5.500h3.500" stroke="#c5e2cd" strokeWidth="1.500" /></Svg></Cell>
      <Cell className="h-[23px] w-[21px] bg-[#eff1f4]"><Svg w={16}><path d="M3 1v5M6 1v5M9 1v3" stroke="#d2d6da" strokeWidth="1.200" /><circle cx="9" cy="9" r="5.800" stroke="#d2d6da" strokeWidth="1.300" strokeDasharray="3 1.500" /><path d="M7 6l4 3-4 4z" fill="#d2e9d7" /></Svg></Cell>
      <Cell className="w-[24px]"><Svg w={17} h={16}><path d="M.5 1h13L8.500 7v8H6V7z" fill="#8d8d8d" stroke="#666" strokeWidth=".8" /><rect x="9" y="8" width="7" height="7" fill="#fff" stroke="#2f86c8" strokeWidth="1.500" strokeDasharray="1.800 1.100" /></Svg></Cell>
      <Bar className="-ml-[2px]" />
      <Cell className="ml-[1px] w-[20px]"><Svg w={10} h={15}><path d="M5 7V2M1.500 5L5 1.500 8.500 5" stroke="#9fd0ab" strokeWidth="2" /><path d="M5 8v5M1.500 10L5 13.500 8.500 10" stroke="#f3c19a" strokeWidth="2" /></Svg></Cell>
      <div className="ml-[9px] h-[2px] w-[7px] bg-[#555]" />
      <div className="ml-[8px] flex h-[14px] w-[102px] items-center"><div className="h-[2px] w-[50px] bg-[#666]" /><div className="h-[12px] w-[2px] bg-[#555]" /><div className="h-[2px] flex-1 bg-[#d7d8d9]" /></div>
      <Cell className="ml-px w-[16px]"><Svg w={9}><path d="M4.500 0v9M0 4.500h9" stroke="#555" strokeWidth="1.800" /></Svg></Cell>
      <div className="ml-[3px] flex h-[28px] w-[60px] shrink-0 items-center bg-white pl-[5px]"><span className="w-[43px] pt-[2px]">100%</span><Chev c="#555" s={1.300} /></div>
      <Bar className="ml-[5px]" />
      <Cell className="ml-[5px] w-[20px]"><Refresh /></Cell>
    </div>
  </div>
);

export default function App() {
  return (
    <div className="relative h-[720px] w-[1280px] overflow-hidden bg-white font-['Open_Sans',sans-serif] leading-none">
      <div className="ml-[2px] mt-[26px] flex h-[668px] w-[1276px] flex-col bg-[#eff0f3]">
        <div className="bg-[linear-gradient(90deg,#e6f4f8_0%,#e9f6f6_35%,#f2f3ee_62%,#f6f1ec_80%,#f7f2ee_100%)]">
          <TitleBar />
          <RibbonTabs />
        </div>
        <Ribbon />
        <div className="mt-[8px] flex pl-[6px]">
          <ContentsPane />
          <div className="ml-[7px] flex flex-col">
            <MapView />
            <TablePane />
          </div>
        </div>
      </div>
      <div className="absolute left-[1001px] top-[623px] whitespace-nowrap text-[19.100px] leading-[22px] text-[#8b8b8b]/60">
        Activate Windows
        <div className="mt-[2px] text-[13.850px] leading-[18px]">Go to Settings to activate Windows.</div>
      </div>
    </div>
  );
}
